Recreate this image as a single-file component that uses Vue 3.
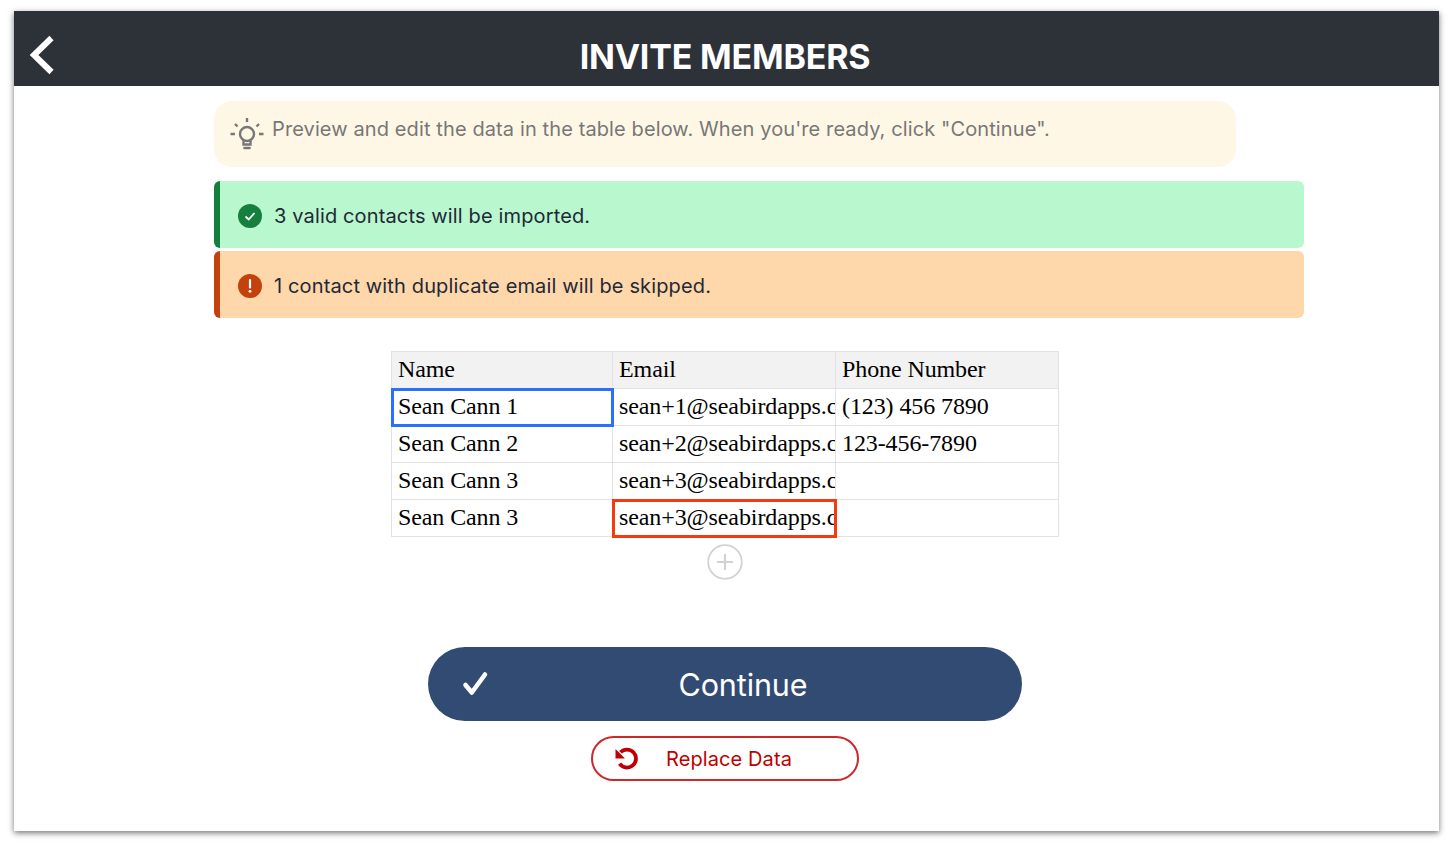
<script setup>
const rows = [
  { name: 'Sean Cann 1', email: 'sean+1@seabirdapps.com', phone: '(123) 456 7890', nameActive: true },
  { name: 'Sean Cann 2', email: 'sean+2@seabirdapps.com', phone: '123-456-7890' },
  { name: 'Sean Cann 3', email: 'sean+3@seabirdapps.com', phone: '' },
  { name: 'Sean Cann 3', email: 'sean+3@seabirdapps.com', phone: '', emailError: true },
];
</script>

<template>
  <div class="page">
    <div class="screen">
      <header class="topbar">
        <svg class="back" width="28" height="40" viewBox="0 0 28 40">
          <path d="M23.5 3 L6 20 L23.5 37" fill="none" stroke="#fff" stroke-width="6" />
        </svg>
        <h1 class="title">INVITE MEMBERS</h1>
      </header>

      <div class="content">
        <div class="tip">
          <svg class="bulb" width="36" height="36" viewBox="0 0 36 36" fill="none" stroke="#777" stroke-width="2.4">
            <circle cx="18" cy="18" r="7" />
            <path d="M14.5 23.5 V28.5 H21.5 V23.5" />
            <path d="M15.5 32 H20.5" stroke-width="2.6" stroke-linecap="round" />
            <path d="M18 2 V6 M6 8 L8.5 10.5 M30 8 L27.5 10.5 M1.5 18 H6 M30 18 H34.5" />
          </svg>
          <span>Preview and edit the data in the table below. When you're ready, click "Continue".</span>
        </div>

        <div class="notice notice-ok">
          <svg width="24" height="24" viewBox="0 0 24 24">
            <circle cx="12" cy="12" r="12" fill="#15803d" />
            <path d="M7.5 12.5 L10.7 15.5 L16.5 9" fill="none" stroke="#fff" stroke-width="1.8" />
          </svg>
          <span>3 valid contacts will be imported.</span>
        </div>
        <div class="notice notice-warn">
          <svg width="24" height="24" viewBox="0 0 24 24">
            <circle cx="12" cy="12" r="12" fill="#c2410c" />
            <path d="M12 6 V13.5" stroke="#fff" stroke-width="2.2" stroke-linecap="round" />
            <circle cx="12" cy="17.3" r="1.4" fill="#fff" />
          </svg>
          <span>1 contact with duplicate email will be skipped.</span>
        </div>

        <table class="sheet">
          <thead>
            <tr>
              <th class="col-name">Name</th>
              <th class="col-email">Email</th>
              <th class="col-phone">Phone Number</th>
            </tr>
          </thead>
          <tbody>
            <tr v-for="(row, i) in rows" :key="i">
              <td :class="{ active: row.nameActive }"><div class="cell">{{ row.name }}</div></td>
              <td :class="{ error: row.emailError }"><div class="cell">{{ row.email }}</div></td>
              <td><div class="cell">{{ row.phone }}</div></td>
            </tr>
          </tbody>
        </table>

        <button class="add-row" aria-label="Add row">
          <svg width="36" height="36" viewBox="0 0 36 36" fill="none" stroke="#d2d2d2">
            <circle cx="18" cy="18" r="16.8" stroke-width="1.8" />
            <path d="M18 10 V26 M10 18 H26" stroke-width="2.2" />
          </svg>
        </button>

        <button class="continue">
          <svg class="continue-check" width="28" height="28" viewBox="0 0 28 28">
            <path d="M4.5 15 L10.8 22.5 L24 4.5" fill="none" stroke="#fff" stroke-width="4.6" stroke-linecap="round" stroke-linejoin="round" />
          </svg>
          <span>Continue</span>
        </button>

        <button class="replace">
          <svg class="replace-icon" width="26" height="26" viewBox="0 0 26 26">
            <path d="M7.5 7.3 A9 9 0 1 1 6.6 18.7" fill="none" stroke="#c00000" stroke-width="3.8" />
            <path d="M2.5 4 L2.5 13.5 L12 13.5 Z" fill="#c00000" />
          </svg>
          <span>Replace Data</span>
        </button>
      </div>
    </div>
  </div>
</template>

<style scoped>
.page {
  width: 1456px;
  height: 848px;
  padding: 11px 17px 17px 14px;
  box-sizing: border-box;
  background: #fff;
  overflow: hidden;
}

.screen {
  height: 820px;
  background: #fff;
  box-shadow: 0 2px 6px rgba(0, 0, 0, 0.55);
}

.topbar {
  position: relative;
  height: 75px;
  background: #2d3138;
  display: flex;
  align-items: center;
  justify-content: center;
  padding-right: 3px;
}

.back {
  position: absolute;
  left: 14px;
  top: 24px;
}

.title {
  margin: 16px 0 0;
  color: #fff;
  font: 700 34px "Inter", "Roboto", sans-serif;
  letter-spacing: -0.2px;
}

.content {
  width: 1022px;
  margin-left: 200px;
  display: flex;
  flex-direction: column;
  align-items: center;
  padding-top: 15px;
}

.tip {
  width: 1022px;
  height: 66px;
  box-sizing: border-box;
  padding: 16px 0 0 15px;
  display: flex;
  align-items: flex-start;
  gap: 7px;
  background: #fff7e6;
  border-radius: 18px;
  color: #777;
  font: 400 20px "Inter", sans-serif;
  letter-spacing: 0.11px;
  line-height: 25px;
}

.bulb {
  flex: none;
  margin-top: -1px;
}

.notice {
  align-self: flex-start;
  flex: none;
  width: 1090px;
  height: 67px;
  box-sizing: border-box;
  display: flex;
  align-items: center;
  gap: 12px;
  padding: 2px 0 0 18px;
  border-radius: 6px;
  color: #1f2937;
  font: 400 20px "Inter", sans-serif;
  letter-spacing: 0.14px;
}

.notice-ok {
  margin-top: 14px;
  background: #b9f7cf;
  border-left: 6px solid #15803d;
}

.notice-warn {
  margin-top: 3px;
  background: #fed7aa;
  border-left: 6px solid #c2410c;
}

.sheet {
  margin-top: 33px;
  border-collapse: collapse;
  table-layout: fixed;
  width: 668px;
  color: #000;
  font: 400 24px "Liberation Serif", serif;
  letter-spacing: -0.1px;
}

.sheet th,
.sheet td {
  height: 37px;
  padding: 0 0 2px 6px;
  border: 1px solid #e2e2e2;
  text-align: left;
  font-weight: 400;
  box-sizing: border-box;
}

.sheet th {
  background: #f2f2f2;
}

.col-name {
  width: 221px;
}

.col-email {
  width: 223px;
}

.cell {
  overflow: hidden;
  white-space: nowrap;
}

.sheet td.active {
  outline: 3px solid #2970ff;
  outline-offset: -2px;
}

.sheet td.error {
  outline: 3px solid #f63a0f;
  outline-offset: -2px;
}

.add-row {
  margin-top: 7px;
  width: 36px;
  height: 36px;
  padding: 0;
  border: 0;
  background: none;
  display: block;
}

.continue {
  position: relative;
  flex: none;
  margin-top: 67px;
  width: 594px;
  height: 74px;
  border: 0;
  border-radius: 37px;
  background: #324b73;
  color: #fff;
  font: 400 30.5px "Inter", sans-serif;
  letter-spacing: -0.1px;
  padding: 0 0 0 36px;
}

.continue-check {
  position: absolute;
  left: 33px;
  top: 23px;
}

.replace {
  position: relative;
  flex: none;
  margin-top: 15px;
  width: 268px;
  height: 45px;
  box-sizing: border-box;
  border: 2px solid #cc2a2a;
  border-radius: 23px;
  background: #fff;
  color: #c00000;
  font: 400 20px "Inter", sans-serif;
  letter-spacing: 0.1px;
  padding: 0 0 0 8px;
}

.replace-icon {
  position: absolute;
  left: 20px;
  top: 7px;
}
</style>
